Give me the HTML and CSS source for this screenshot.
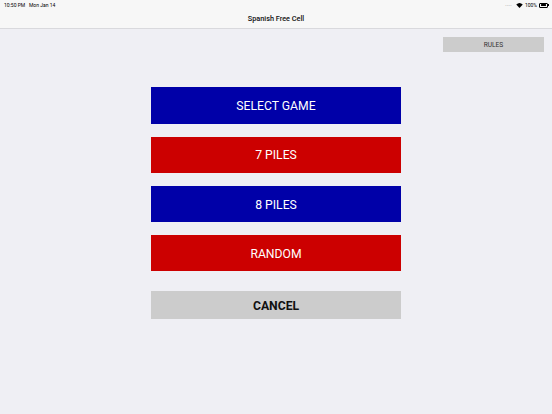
FILE: index.html
```html
<!DOCTYPE html>
<html lang="en">
<head>
<meta charset="utf-8">
<title>Spanish Free Cell</title>
<link rel="stylesheet" href="styles.css">
</head>
<body>
<div class="screen">
  <header class="top">
    <div class="status">
      <span class="status-left">10:50 PM&nbsp;&nbsp;&nbsp;Mon Jan 14</span>
      <span class="status-right">
        <span class="dots">••••</span>
        <svg class="wifi" width="7" height="5" viewBox="0 0 14 10">
          <path d="M7 10 L0.5 3.2 A9.5 9.5 0 0 1 13.5 3.2 Z" fill="#000"/>
        </svg>
        <span class="pct">100%</span>
        <span class="battery"><span class="battery-fill"></span></span><span class="battery-cap"></span>
      </span>
    </div>
    <div class="nav">Spanish Free Cell</div>
  </header>
  <main class="content">
    <div class="rules-row">
      <button class="rules">RULES</button>
    </div>
    <div class="menu">
      <button class="btn blue">SELECT GAME</button>
      <button class="btn red">7 PILES</button>
      <button class="btn blue">8 PILES</button>
      <button class="btn red">RANDOM</button>
      <button class="btn cancel">CANCEL</button>
    </div>
  </main>
</div>
</body>
</html>
```

FILE: styles.css
```css
* { box-sizing: border-box; }

html, body {
  margin: 0;
  padding: 0;
  background: #efeff4;
}

.screen {
  width: 552px;
  height: 414px;
  overflow: hidden;
  font-family: Roboto, "Liberation Sans", sans-serif;
  background: #efeff4;
}

.top {
  height: 29px;
  background: #f7f7f7;
  border-bottom: 1px solid #d9d9dd;
}

.status {
  height: 10px;
  display: flex;
  justify-content: space-between;
  align-items: center;
  padding: 0 3px 0 4px;
  font-size: 5px;
  color: #000;
}

.status-right {
  display: flex;
  align-items: center;
  gap: 2px;
}

.dots {
  font-size: 4px;
  color: #b0b0b0;
  letter-spacing: 0.3px;
  margin-right: 2px;
}

.wifi { display: block; }

.battery {
  width: 9px;
  height: 5px;
  border: 0.6px solid #000;
  border-radius: 1px;
  padding: 0.6px;
  display: flex;
}

.battery-fill {
  flex: 1;
  background: #000;
  border-radius: 0.5px;
}

.battery-cap {
  width: 1px;
  height: 2px;
  background: #000;
  margin-left: -2px;
}

.nav {
  height: 18px;
  display: flex;
  align-items: center;
  justify-content: center;
  font-size: 7.3px;
  font-weight: 500;
  color: #111;
  padding-bottom: 1px;
}

.content {
  display: flex;
  flex-direction: column;
}

.rules-row {
  display: flex;
  justify-content: flex-end;
  padding: 8px 8px 0 0;
}

.rules {
  width: 101px;
  height: 15px;
  border: none;
  background: #cccccc;
  color: #333;
  font-family: Roboto, "Liberation Sans", sans-serif;
  font-size: 6.6px;
  padding: 0;
}

.menu {
  display: flex;
  flex-direction: column;
  align-items: center;
  gap: 13px;
  padding-top: 35.3px;
}

.btn {
  width: 250px;
  height: 36.3px;
  border: none;
  padding: 1px 0 0;
  color: #fff;
  font-family: Roboto, "Liberation Sans", sans-serif;
  font-size: 12.2px;
}

.blue { background: #0000a8; }
.red { background: #cc0000; }

.cancel {
  margin-top: 6.5px;
  height: 28.3px;
  background: #cccccc;
  color: #111;
  font-weight: 700;
  font-size: 12.2px;
}
```
